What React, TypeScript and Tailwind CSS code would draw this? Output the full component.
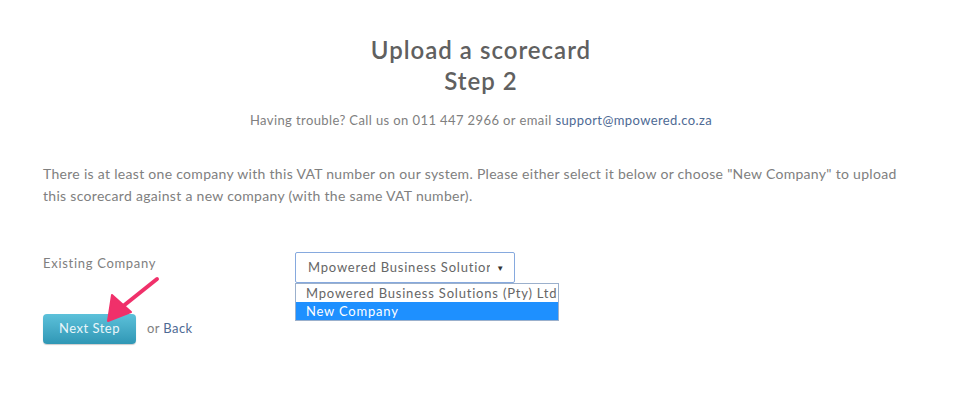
import React from "react";

export default function App() {
  return (
    <div
      className="w-[962px] h-[395px] bg-white text-[#666] relative overflow-hidden"
      style={{ fontFamily: "Lato, 'Open Sans', sans-serif" }}
    >
      <div className="pt-[34px] text-center text-[#606060] text-[24px] font-semibold leading-[31px] tracking-[1px]">
        <div>Upload a scorecard</div>
        <div>Step 2</div>
      </div>
      <div className="mt-[15px] text-center text-[13px] text-[#808080] leading-[18px] tracking-[0.4px]">
        Having trouble? Call us on 011 447 2966 or email{" "}
        <span className="text-[#4e6a94]">support@mpowered.co.za</span>
      </div>
      <div className="mt-[34px] pl-[43px] pr-[50px] text-[14px] leading-[22px] text-[#808080] tracking-[0.3px]">
        There is at least one company with this VAT number on our system. Please either select it below or choose "New Company" to upload this scorecard against a new company (with the same VAT number).
      </div>
      <div className="mt-[45px] flex px-[43px]">
        <div className="w-[252px] pt-[2px] text-[13px] text-[#808080] leading-[18px] tracking-[0.7px]">Existing Company</div>
        <div className="flex flex-col">
          <div className="w-[220px] h-[31px] border border-[#86a9de] rounded-[2px] flex items-center justify-between pl-[12px] pr-[9px] text-[13px] text-[#666] bg-white tracking-[0.8px]">
            <span className="whitespace-nowrap overflow-hidden w-[182px]">Mpowered Business Solutior</span>
            <span className="text-[8px] text-[#333]">▼</span>
          </div>
          <div className="w-[264px] border border-[#9bb0cc] text-[13px] leading-[18px] bg-white tracking-[0.8px]">
            <div className="pl-[10px] text-[#666] whitespace-nowrap">Mpowered Business Solutions (Pty) Ltd</div>
            <div className="pl-[10px] bg-[#1e90ff] text-white">New Company</div>
          </div>
        </div>
      </div>
      <div className="mt-[-7px] flex items-center px-[43px]">
        <button className="w-[93px] h-[30px] rounded-[4px] bg-gradient-to-b from-[#5cc1da] to-[#2f97b5] text-[#eaf6fa] text-[13px] tracking-[0.5px] shadow-[0_1px_1px_rgba(0,0,0,0.2)]">
          Next Step
        </button>
        <span className="ml-[11px] text-[13px] text-[#808080] tracking-[0.4px]">
          or <span className="text-[#4e6a94]">Back</span>
        </span>
      </div>
      <svg className="absolute left-0 top-0" width="962" height="395" viewBox="0 0 962 395">
        <line x1="157" y1="279" x2="122" y2="307" stroke="#f0306a" strokeWidth="4" strokeLinecap="round" />
        <polygon points="108,321 112,295 131,312" fill="#f0306a" stroke="#f0306a" strokeWidth="2" strokeLinejoin="round" />
      </svg>
    </div>
  );
}
